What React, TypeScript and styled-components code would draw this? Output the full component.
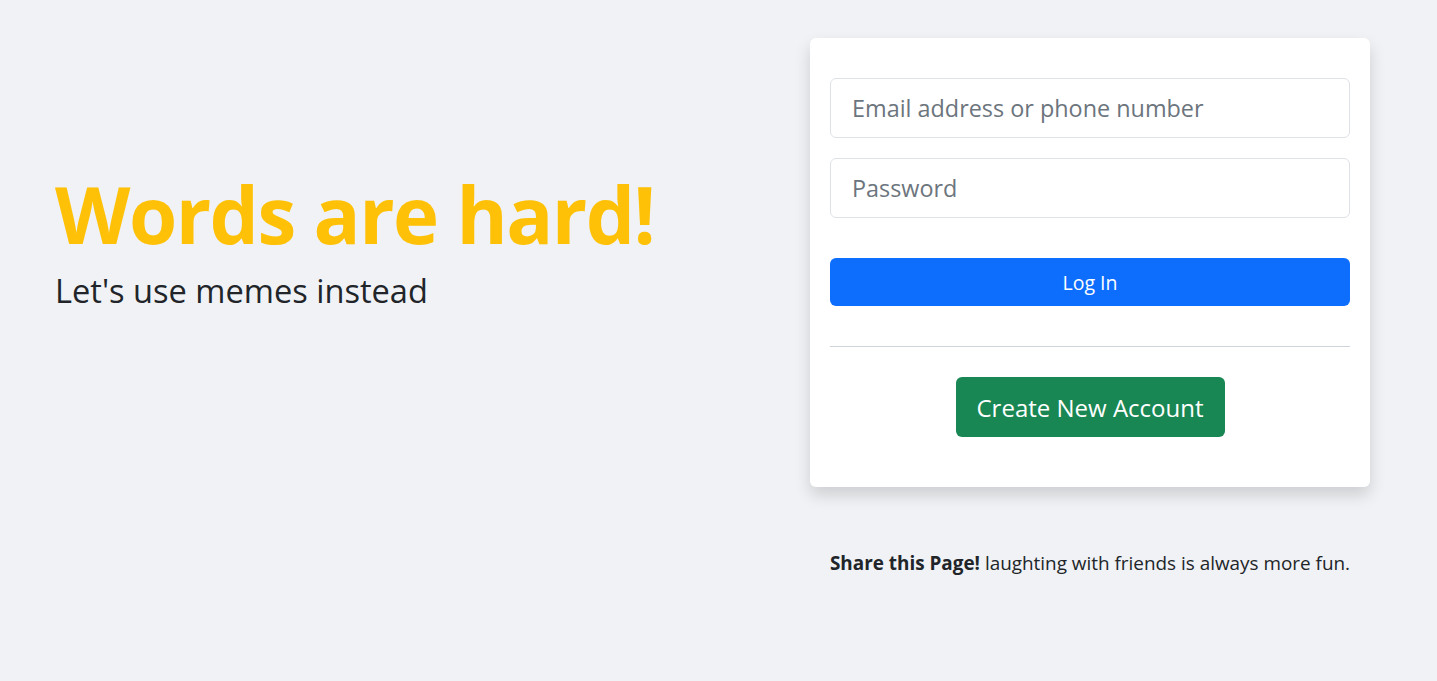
import React, { useState } from "react";
import styled, { createGlobalStyle } from "styled-components";

const GlobalStyle = createGlobalStyle`
  * {
    box-sizing: border-box;
  }
  body {
    margin: 0;
    background: #f0f2f5;
    color: #212529;
    font-family: "Open Sans", "Noto Sans", "Liberation Sans", sans-serif;
  }
`;

const Page = styled.div`
  min-height: 681px;
  display: flex;
  align-items: flex-start;
  padding: 38px 67px 0 55px;
`;

const Intro = styled.div`
  flex: 1;
  padding-top: 128px;
`;

const Title = styled.h1`
  margin: 0;
  font-size: 78px;
  line-height: 96px;
  font-weight: 700;
  color: #ffc107;
  letter-spacing: -1.5px;
`;

const Subtitle = styled.p`
  margin: 9px 0 0;
  font-size: 32.6px;
  line-height: 40px;
  font-weight: 400;
  color: #212529;
`;

const Side = styled.div`
  width: 560px;
  display: flex;
  flex-direction: column;
  align-items: center;
`;

const Card = styled.form`
  width: 100%;
  background: #fff;
  border-radius: 6px;
  box-shadow: 0 8px 16px rgba(0, 0, 0, 0.15);
  padding: 40px 20px 50px;
  display: flex;
  flex-direction: column;
`;

const Input = styled.input`
  height: 60px;
  width: 100%;
  padding: 0 21px;
  border: 1px solid #dee2e6;
  border-radius: 6px;
  font-family: inherit;
  font-size: 23.4px;
  color: #212529;
  margin-bottom: 20px;

  &::placeholder {
    color: #6c757d;
  }

  &:focus {
    outline: none;
    border-color: #86b7fe;
  }
`;

const Button = styled.button<{ $variant: "primary" | "success" }>`
  border: none;
  border-radius: 6px;
  color: #fff;
  font-family: inherit;
  cursor: pointer;
  white-space: nowrap;
  background: ${(p) => (p.$variant === "primary" ? "#0d6efd" : "#198754")};
  height: ${(p) => (p.$variant === "primary" ? "48px" : "60px")};
  font-size: ${(p) => (p.$variant === "primary" ? "19.5px" : "24px")};
  padding: 0;
`;

const LoginButton = styled(Button)`
  width: 100%;
  margin-top: 20px;
`;

const Divider = styled.hr`
  width: 100%;
  margin: 40px 0 30px;
  border: none;
  border-top: 1px solid #ced4da;
`;

const CreateButton = styled(Button)`
  align-self: center;
  width: 269px;
`;

const ShareNote = styled.p`
  margin: 63px 0 0;
  font-size: 18.9px;
  color: #212529;
  white-space: nowrap;

  strong {
    font-weight: 700;
  }
`;

const App: React.FC = () => {
  const [email, setEmail] = useState("");
  const [password, setPassword] = useState("");

  const handleSubmit = (e: React.FormEvent) => {
    e.preventDefault();
  };

  return (
    <>
      <GlobalStyle />
      <Page>
        <Intro>
          <Title>Words are hard!</Title>
          <Subtitle>Let's use memes instead</Subtitle>
        </Intro>

        <Side>
          <Card onSubmit={handleSubmit}>
            <Input
              type="text"
              placeholder="Email address or phone number"
              value={email}
              onChange={(e) => setEmail(e.target.value)}
            />
            <Input
              type="password"
              placeholder="Password"
              value={password}
              onChange={(e) => setPassword(e.target.value)}
            />
            <LoginButton type="submit" $variant="primary">
              Log In
            </LoginButton>
            <Divider />
            <CreateButton type="button" $variant="success">
              Create New Account
            </CreateButton>
          </Card>
          <ShareNote>
            <strong>Share this Page!</strong> laughting with friends is always
            more fun.
          </ShareNote>
        </Side>
      </Page>
    </>
  );
};

export default App;
